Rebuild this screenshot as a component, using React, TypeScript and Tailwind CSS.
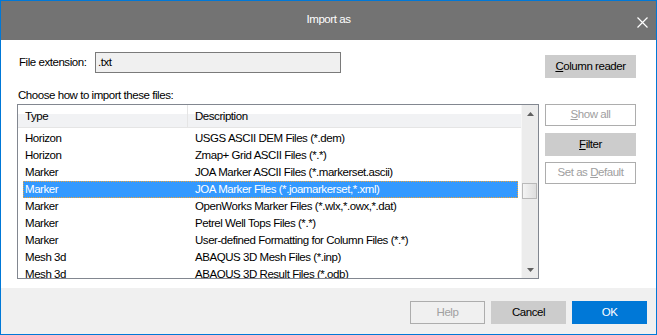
const ROWS: [string, string][] = [
  ["Horizon", "USGS ASCII DEM Files (*.dem)"],
  ["Horizon", "Zmap+ Grid ASCII Files (*.*)"],
  ["Marker", "JOA Marker ASCII Files (*.markerset.ascii)"],
  ["Marker", "JOA Marker Files (*.joamarkerset,*.xml)"],
  ["Marker", "OpenWorks Marker Files (*.wlx,*.owx,*.dat)"],
  ["Marker", "Petrel Well Tops Files (*.*)"],
  ["Marker", "User-defined Formatting for Column Files (*.*)"],
  ["Mesh 3d", "ABAQUS 3D Mesh Files (*.inp)"],
  ["Mesh 3d", "ABAQUS 3D Result Files (*.odb)"],
];

const SELECTED = 3;

function Arrow({ up }: { up?: boolean }) {
  return (
    <svg width="7" height="4" viewBox="0 0 7 4" className="block">
      <path d={up ? "M3.5 0 L7 4 L0 4 Z" : "M0 0 L7 0 L3.5 4 Z"} fill="#606060" />
    </svg>
  );
}

function Scrollbar() {
  return (
    <div className="flex w-[17px] shrink-0 flex-col border-l border-[#f7f7f7] bg-[#ececec]">
      <div className="flex h-[17px] items-center justify-center">
        <Arrow up />
      </div>
      <div className="flex-1 pl-0 pt-[61px]">
        <div className="h-[16px] w-[15px] border border-[#b9b9b9] bg-gradient-to-r from-[#f4f4f4] to-[#dedede]" />
      </div>
      <div className="flex h-[17px] items-center justify-center">
        <Arrow />
      </div>
    </div>
  );
}

function FileTable() {
  return (
    <div className="mt-px flex h-[175px] border border-[#828790] bg-white">
      <div className="flex min-w-0 flex-1 flex-col overflow-hidden">
        <div className="flex h-[23px] shrink-0 border-b border-[#e5e5e5] bg-gradient-to-b from-white from-40% to-[#f1f2f4] to-40%">
          <div className="w-[170px] border-r border-[#e5e5e5] pl-[7px] pt-[6px]">Type</div>
          <div className="flex-1 pl-[7px] pt-[6px]">Description</div>
        </div>
        <div className="pt-[2px]">
          {ROWS.map(([type, desc], i) => {
            const sel = i === SELECTED;
            return (
              <div
                key={i}
                className={
                  sel
                    ? "ml-[5px] mr-[3px] flex h-[17px] items-center border border-dotted border-[#e9a23b] bg-[#3399ff] text-white"
                    : "ml-[5px] mr-[3px] flex h-[17px] items-center border border-transparent"
                }
              >
                <span className="w-[170px] pl-px">{type}</span>
                <span className="whitespace-nowrap pl-px">{desc}</span>
              </div>
            );
          })}
        </div>
      </div>
      <Scrollbar />
    </div>
  );
}

function SideButton({ children, disabled, className = "" }: { children: React.ReactNode; disabled?: boolean; className?: string }) {
  return (
    <div
      className={
        (disabled
          ? "border border-[#adadad] bg-white text-[#a0a0a0] "
          : "bg-[#cccccc] text-black ") +
        "flex w-[91px] items-center justify-center " +
        className
      }
    >
      {children}
    </div>
  );
}

export default function App() {
  return (
    <div className="flex h-[335px] w-[657px] flex-col border border-[#0078d7] bg-white font-['Liberation_Sans',Arial,sans-serif] text-[11.5px] leading-none tracking-[-0.45px] text-black">
      <div className="grid h-[39px] shrink-0 grid-cols-[1fr_auto_1fr] items-center bg-[#737373] text-white">
        <div />
        <div className="pb-[2px]">Import as</div>
        <div className="flex justify-end pr-[8px] pt-[4px]">
          <svg width="11" height="11" viewBox="0 0 11 11">
            <path d="M0.5 0.5 L10.5 10.5 M10.5 0.5 L0.5 10.5" stroke="white" strokeWidth="1.2" />
          </svg>
        </div>
      </div>

      <div className="flex h-[248px] shrink-0 px-[16px] pt-[12px]">
        <div className="flex w-[522px] flex-col">
          <div className="flex h-[21px] items-center">
            <span className="w-[78px] pl-[2px]">File extension:</span>
            <div className="flex h-[21px] w-[246px] items-center border border-[#7a7a7a] bg-[#f0f0f0] pl-[2px]">.txt</div>
          </div>
          <div className="mt-[14px] pl-px leading-[16px]">Choose how to import these files:</div>
          <FileTable />
        </div>

        <div className="ml-[6px] flex flex-col">
          <SideButton className="mt-[3px] h-[23px]">
            <span><u>C</u>olumn reader</span>
          </SideButton>
          <SideButton disabled className="mt-[26px] h-[22px]">
            <span><u>S</u>how all</span>
          </SideButton>
          <SideButton className="mt-[7px] h-[23px]">
            <span><u>F</u>ilter</span>
          </SideButton>
          <SideButton disabled className="mt-[6px] h-[22px]">
            <span>Set as <u>D</u>efault</span>
          </SideButton>
        </div>
      </div>

      <div className="flex flex-1 items-start justify-end gap-[6px] bg-[#f0f0f0] pr-[9px] pt-[13px]">
        <div className="flex h-[23px] w-[75px] items-center justify-center border border-[#adadad] text-[#a0a0a0]">Help</div>
        <div className="flex h-[23px] w-[75px] items-center justify-center bg-[#cccccc]">Cancel</div>
        <div className="flex h-[23px] w-[75px] items-center justify-center bg-[#0078d7] text-white">OK</div>
      </div>
    </div>
  );
}
